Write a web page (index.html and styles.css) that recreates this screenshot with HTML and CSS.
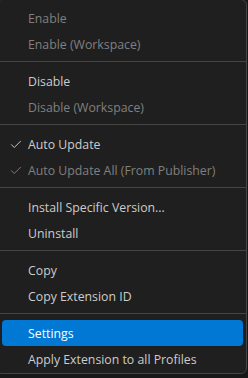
FILE: index.html
```html
<!DOCTYPE html>
<html>
<head>
<meta charset="UTF-8">
<link rel="stylesheet" href="styles.css">
</head>
<body>
<div class="menu">
	<div class="item disabled"><span class="label">Enable</span></div>
	<div class="item disabled"><span class="label">Enable (Workspace)</span></div>
	<div class="separator"></div>
	<div class="item"><span class="label">Disable</span></div>
	<div class="item disabled"><span class="label">Disable (Workspace)</span></div>
	<div class="separator"></div>
	<div class="item">
		<svg class="check" viewBox="0 0 16 16"><polyline points="2.5,8.5 6,12 13.5,4.5"/></svg>
		<span class="label">Auto Update</span>
	</div>
	<div class="item disabled">
		<svg class="check" viewBox="0 0 16 16"><polyline points="2.5,8.5 6,12 13.5,4.5"/></svg>
		<span class="label">Auto Update All (From Publisher)</span>
	</div>
	<div class="separator"></div>
	<div class="item"><span class="label">Install Specific Version...</span></div>
	<div class="item"><span class="label">Uninstall</span></div>
	<div class="separator"></div>
	<div class="item"><span class="label">Copy</span></div>
	<div class="item"><span class="label">Copy Extension ID</span></div>
	<div class="separator"></div>
	<div class="item active"><span class="label">Settings</span></div>
	<div class="item"><span class="label">Apply Extension to all Profiles</span></div>
</div>
</body>
</html>
```

FILE: styles.css
```css
html, body {
	margin: 0;
	padding: 0;
	background-color: #181818;
	overflow: hidden;
	height: 100%;
}

body {
	font-family: 'Open Sans', 'Noto Sans', sans-serif;
	font-size: 12.3px;
}

.menu {
	margin: -1px 0 0 -4px;
	width: 251px;
	box-sizing: border-box;
	background-color: #1f1f1f;
	border: 1px solid #454545;
	border-radius: 6px;
	padding: 5px 0 0;
	height: 375px;
}

.item {
	position: relative;
	display: flex;
	align-items: center;
	height: 26px;
	margin: 0 3px 0 5px;
	padding-left: 26px;
	color: #cccccc;
	border-radius: 4px;
}

.item.disabled {
	color: #808080;
}

.item.active {
	background-color: #0078d4;
	color: #ffffff;
}

.label {
	white-space: nowrap;
}

.check {
	position: absolute;
	left: 7px;
	top: 6px;
	width: 14px;
	height: 14px;
	fill: none;
	stroke: currentColor;
	stroke-width: 1.1;
}

.separator {
	height: 1px;
	background-color: #454545;
	margin: 4px 0 6px;
}
```
